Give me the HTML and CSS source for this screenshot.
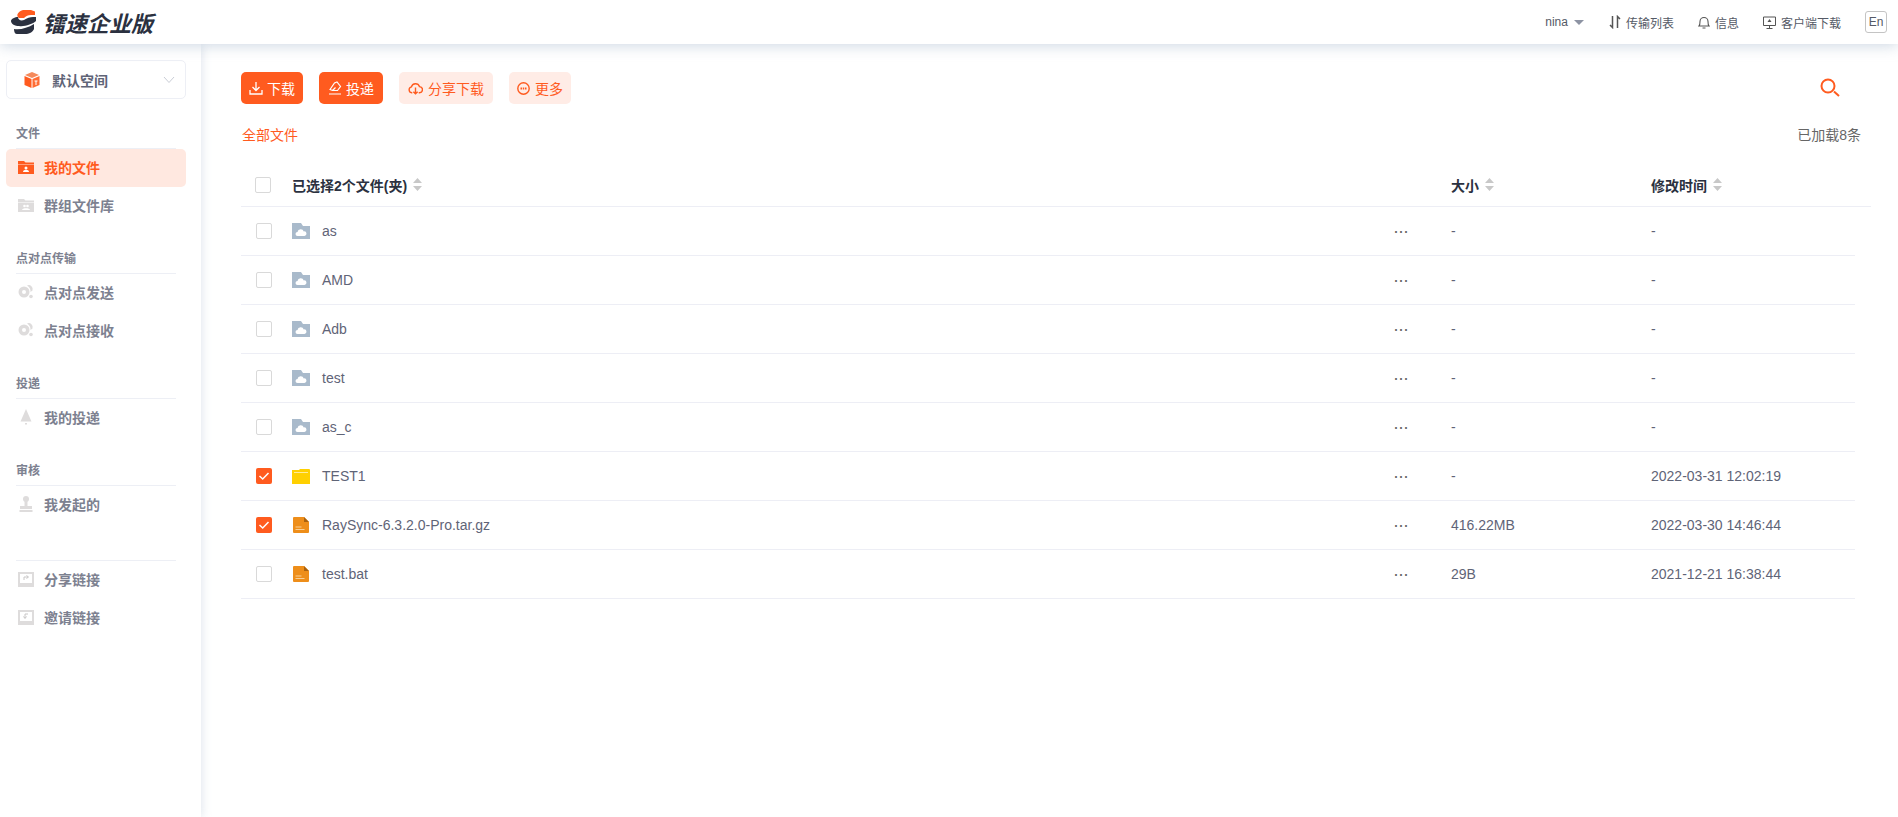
FILE: index.html
```html
<!DOCTYPE html>
<html lang="zh-CN">
<head>
    <meta charset="UTF-8">
    <title>镭速企业版</title>
    <link rel="stylesheet" href="styles.css">
</head>
<body>
    <svg class="defs">
        <symbol id="cloud-folder" viewBox="0 0 18 16">
            <path d="M0 0h9l2 3h7v13H0z" fill="#a9bacb"/>
            <path d="M5.500 13a2 2 0 0 1 0-4 3.300 3.300 0 0 1 6.300-.6 2.300 2.300 0 0 1 .7 4.600z" fill="#fff"/>
        </symbol>
        <symbol id="file-orange" viewBox="0 0 16 16">
            <path d="M1 0h10l5 5v10a1 1 0 0 1-1 1H1a1 1 0 0 1-1-1V1a1 1 0 0 1 1-1z" fill="#ee8e1a"/>
            <path d="M11 0l5 5h-5z" fill="#a9620f"/>
            <path d="M2.500 9.500h6v1h-6zM2.500 12h9v1h-9z" fill="#f8cf95"/>
        </symbol>
        <symbol id="sort" viewBox="0 0 9 13">
            <path d="M4.500 0L9 5H0zM0 8h9l-4.500 5z" fill="#c8c8c8"/>
        </symbol>
        <symbol id="p2p" viewBox="0 0 16 16">
            <circle cx="6" cy="8" r="5.500" fill="#dedcdc"/>
            <circle cx="6" cy="8" r="2" fill="#fff"/>
            <path d="M9 1.500a4 4 0 0 1 5.500 5L12.500 8A7 7 0 0 0 9 1.500z" fill="#dedcdc"/>
            <circle cx="13" cy="12.500" r="1.800" fill="#dedcdc"/>
        </symbol>
    </svg>

    <header class="topbar">
        <div class="logo">
            <svg class="logo-mark" width="26" height="24" viewBox="0 0 26 24">
                <path d="M12 0h8l4 1.500V5h-4c-3 0-5 1-7 3H8C5 6 6 2 12 0z" fill="#ff5b1f"/>
                <path d="M0 11c0-2 4-4 7-4 0 3 3 4 6 3 3-2 6-3 9-3h3v4c-3 3-12 6-17 5-4 0-8-2-8-5z" fill="#2b3140"/>
                <path d="M3 19c6 1 14-1 20-5v5c-1 3-5 5-9 5H6c-2 0-3-2-3-5z" fill="#2b3140"/>
            </svg>
            <span class="logo-text">镭速企业版</span>
        </div>
        <nav class="top-nav">
            <span class="user">nina<i class="caret"></i></span>
            <a class="top-link">
                <svg width="12" height="14" viewBox="0 0 12 14"><path d="M3.500 1v11.500L1 10M8.500 13V1.500L11 4" fill="none" stroke="#555" stroke-width="1.500"/></svg>
                传输列表
            </a>
            <a class="top-link">
                <svg width="12" height="13" viewBox="0 0 12 13"><path d="M1 10c1-1 1-2 1-4.500a4 4 0 0 1 8 0c0 2.500 0 3.500 1 4.500zM4.500 12h3" fill="none" stroke="#555" stroke-width="1.100"/></svg>
                信息
            </a>
            <a class="top-link">
                <svg width="13" height="13" viewBox="0 0 13 13"><path d="M.5 1h12v8.500H.5zM6.500 9.500V12M3.500 12.500h6" fill="none" stroke="#555"/><path d="M6.500 3L4.500 6h4z" fill="#555"/></svg>
                客户端下载
            </a>
            <span class="lang">En</span>
        </nav>
    </header>

    <div class="layout">
        <aside class="sidebar">
            <div class="space-select">
                <svg width="16" height="16" viewBox="0 0 16 16"><path d="M8 0l7 3-7 3-7-3z" fill="#f58a5c"/><path d="M.5 4l7 3v9l-7-3z" fill="#ff5b1f"/><path d="M8.500 7l7-3v9l-7 3z" fill="#ff6d35"/><path d="M10.500 9h3M12 9v4" stroke="#fff" fill="none"/></svg>
                <span>默认空间</span>
                <svg class="chevron" width="12" height="8" viewBox="0 0 12 8"><path d="M1 1l5 5.500L11 1" fill="none" stroke="#c9cdd6"/></svg>
            </div>

            <div class="side-group">
                <div class="side-title">文件</div>
                <a class="side-item active">
                    <svg width="16" height="14" viewBox="0 0 16 14"><path d="M0 1h6l1.500 1.500H16V4H0z" fill="#ff5b1f"/><path d="M0 4.500h16V14H0z" fill="#ff5b1f"/><circle cx="8" cy="8" r="1.500" fill="#fff"/><path d="M5 12c0-3 6-3 6 0z" fill="#fff"/></svg>
                    我的文件
                </a>
                <a class="side-item">
                    <svg width="16" height="14" viewBox="0 0 16 14"><path d="M0 1h6l1.500 1.500H16V4H0z" fill="#dedcdc"/><path d="M0 4.500h16V14H0z" fill="#dedcdc"/><circle cx="6.500" cy="8" r="1.300" fill="#fff"/><circle cx="9.500" cy="8" r="1.300" fill="#fff"/><path d="M4 12c0-2.500 8-2.500 8 0z" fill="#fff"/></svg>
                    群组文件库
                </a>
            </div>

            <div class="side-group">
                <div class="side-title">点对点传输</div>
                <a class="side-item"><svg width="16" height="16"><use href="#p2p"/></svg>点对点发送</a>
                <a class="side-item"><svg width="16" height="16"><use href="#p2p"/></svg>点对点接收</a>
            </div>

            <div class="side-group">
                <div class="side-title">投递</div>
                <a class="side-item">
                    <svg width="16" height="16" viewBox="0 0 16 16"><path d="M8 0l5.500 12.500H2.500z" fill="#dedcdc"/><path d="M7 14h2v1.500H7z" fill="#dedcdc"/></svg>
                    我的投递
                </a>
            </div>

            <div class="side-group">
                <div class="side-title">审核</div>
                <a class="side-item">
                    <svg width="16" height="16" viewBox="0 0 16 16"><circle cx="8" cy="3" r="3" fill="#dedcdc"/><path d="M6.500 5h3v5h-3z" fill="#dedcdc"/><path d="M2 10h12v3H2zM1.500 14h13v2h-13z" fill="#dedcdc"/></svg>
                    我发起的
                </a>
            </div>

            <div class="side-group links">
                <a class="side-item">
                    <svg width="16" height="15" viewBox="0 0 16 15"><path d="M0 0h16v15H0z" fill="#dedcdc"/><path d="M2 2h12v9H2z" fill="#fff"/><path d="M6 8V5h4M8.500 3.500L10.500 5 8.500 6.500" fill="none" stroke="#c8c6c6"/></svg>
                    分享链接
                </a>
                <a class="side-item">
                    <svg width="16" height="15" viewBox="0 0 16 15"><path d="M0 0h16v15H0z" fill="#dedcdc"/><path d="M2 2h12v9H2z" fill="#fff"/><path d="M10 4H7v4M5.500 6.500L7 8.500 8.500 6.500" fill="none" stroke="#c8c6c6"/></svg>
                    邀请链接
                </a>
            </div>
        </aside>

        <main class="content">
            <div class="toolbar">
                <button class="btn primary small">
                    <svg width="14" height="14" viewBox="0 0 14 14"><path d="M7 1v8M3.500 6L7 9.500 10.500 6M1 9v4h12V9" fill="none" stroke="#fff" stroke-width="1.300"/></svg>
                    下载
                </button>
                <button class="btn primary">
                    <svg width="14" height="14" viewBox="0 0 14 14"><path d="M2 8.500L6.500 2 9 1l3.500 4.500L9.500 9.500H4.500zM4.500 9.500l3-3M1 13h12" fill="none" stroke="#fff" stroke-width="1.200"/></svg>
                    投递
                </button>
                <button class="btn light">
                    <svg width="15" height="13" viewBox="0 0 14 12"><path d="M4 10H3.500a2.800 2.800 0 0 1-.3-5.500 3.900 3.900 0 0 1 7.500-.3A2.900 2.900 0 0 1 10.500 10H10M7 5v6M5 9l2 2 2-2" fill="none" stroke="#ff5b1f" stroke-width="1.300"/></svg>
                    分享下载
                </button>
                <button class="btn light small">
                    <svg width="13" height="13" viewBox="0 0 13 13"><circle cx="6.500" cy="6.500" r="5.700" fill="none" stroke="#ff5b1f" stroke-width="1.400"/><path d="M3.500 6.500h6" stroke="#ff5b1f" stroke-width="1.800" stroke-dasharray="1.500 .75"/></svg>
                    更多
                </button>
                <svg class="search" width="21" height="19" viewBox="0 0 21 19"><circle cx="8" cy="8" r="6.500" fill="none" stroke="#ff5b1f" stroke-width="2"/><path d="M14 13.500l5 4.500" stroke="#ff5b1f" stroke-width="2"/></svg>
            </div>

            <div class="crumbs">
                <a class="crumb">全部文件</a>
                <span class="loaded">已加载8条</span>
            </div>

            <div class="table-head">
                <i class="check"></i>
                <span class="head-cell">已选择2个文件(夹)<svg width="9" height="13"><use href="#sort"/></svg></span>
                <span></span>
                <span class="head-cell">大小<svg width="9" height="13"><use href="#sort"/></svg></span>
                <span class="head-cell">修改时间<svg width="9" height="13"><use href="#sort"/></svg></span>
            </div>

            <div class="row">
                <i class="check"></i>
                <span class="name"><svg class="type-icon" width="18" height="16"><use href="#cloud-folder"/></svg>as</span>
                <span class="dots">···</span><span>-</span><span>-</span>
            </div>
            <div class="row">
                <i class="check"></i>
                <span class="name"><svg class="type-icon" width="18" height="16"><use href="#cloud-folder"/></svg>AMD</span>
                <span class="dots">···</span><span>-</span><span>-</span>
            </div>
            <div class="row">
                <i class="check"></i>
                <span class="name"><svg class="type-icon" width="18" height="16"><use href="#cloud-folder"/></svg>Adb</span>
                <span class="dots">···</span><span>-</span><span>-</span>
            </div>
            <div class="row">
                <i class="check"></i>
                <span class="name"><svg class="type-icon" width="18" height="16"><use href="#cloud-folder"/></svg>test</span>
                <span class="dots">···</span><span>-</span><span>-</span>
            </div>
            <div class="row">
                <i class="check"></i>
                <span class="name"><svg class="type-icon" width="18" height="16"><use href="#cloud-folder"/></svg>as_c</span>
                <span class="dots">···</span><span>-</span><span>-</span>
            </div>
            <div class="row">
                <i class="check checked"><svg width="16" height="16" viewBox="0 0 16 16"><path d="M3.500 8l3.200 3 5.800-6" fill="none" stroke="#fff" stroke-width="1.500"/></svg></i>
                <span class="name">
                    <svg class="type-icon" width="18" height="15" viewBox="0 0 18 15"><path d="M0 1h7l1-1h9a1 1 0 0 1 1 1v14H0z" fill="#ffd000"/><path d="M2 3h14v1H2z" fill="#ffeb99"/></svg>TEST1
                </span>
                <span class="dots">···</span><span>-</span><span>2022-03-31 12:02:19</span>
            </div>
            <div class="row">
                <i class="check checked"><svg width="16" height="16" viewBox="0 0 16 16"><path d="M3.500 8l3.200 3 5.800-6" fill="none" stroke="#fff" stroke-width="1.500"/></svg></i>
                <span class="name"><svg class="type-icon file" width="16" height="16"><use href="#file-orange"/></svg>RaySync-6.3.2.0-Pro.tar.gz</span>
                <span class="dots">···</span><span>416.22MB</span><span>2022-03-30 14:46:44</span>
            </div>
            <div class="row">
                <i class="check"></i>
                <span class="name"><svg class="type-icon file" width="16" height="16"><use href="#file-orange"/></svg>test.bat</span>
                <span class="dots">···</span><span>29B</span><span>2021-12-21 16:38:44</span>
            </div>
        </main>
    </div>
</body>
</html>
```

FILE: styles.css
```css
* {
    box-sizing: border-box;
}

body, html {
    margin: 0;
    height: 100%;
    background-color: #fff;
    font-family: "Liberation Sans", "Noto Sans CJK SC", sans-serif;
    font-size: 14px;
    color: #5f6477;
}

.defs {
    display: none;
}

/* top bar */
.topbar {
    position: relative;
    z-index: 2;
    display: flex;
    align-items: center;
    justify-content: space-between;
    height: 44px;
    padding: 0 11px;
    background-color: #fff;
    box-shadow: 0 2px 14px rgba(170, 185, 205, 0.55);
}

.logo {
    display: flex;
    align-items: center;
    gap: 6px;
}

.logo-text {
    font-size: 22px;
    font-weight: 700;
    font-style: italic;
    color: #2b3140;
}

.top-nav {
    display: flex;
    align-items: center;
    font-size: 12px;
    color: #555a66;
}

.user {
    display: flex;
    align-items: center;
    gap: 6px;
    margin-right: 25px;
}

.caret {
    width: 0;
    height: 0;
    border-left: 5px solid transparent;
    border-right: 5px solid transparent;
    border-top: 5px solid #8d93a3;
}

.top-link {
    display: flex;
    align-items: center;
    gap: 5px;
    margin-right: 24px;
}

.lang {
    width: 22px;
    height: 22px;
    line-height: 20px;
    text-align: center;
    border: 1px solid #c4c4c4;
    border-radius: 3px;
}

/* sidebar */
.layout {
    display: flex;
    height: calc(100% - 44px);
}

.sidebar {
    width: 201px;
    flex-shrink: 0;
    padding: 16px 15px 0 6px;
    box-shadow: 2px 0 8px rgba(170, 185, 205, 0.3);
}

.space-select {
    display: flex;
    align-items: center;
    height: 39px;
    padding: 0 10px 0 17px;
    border: 1px solid #edeff5;
    border-radius: 5px;
    font-size: 14px;
    font-weight: 700;
    color: #5f6477;
}

.space-select span {
    margin-left: 12px;
}

.chevron {
    margin-left: auto;
}

.side-group {
    margin-top: 24px;
}

.space-select + .side-group {
    margin-top: 25px;
}

.side-title {
    margin: 0 10px;
    padding-top: 2px;
    height: 25px;
    line-height: 17px;
    font-size: 12px;
    font-weight: 700;
    color: #7d8190;
    border-bottom: 1px solid #edeff5;
}

.side-item {
    display: flex;
    align-items: center;
    gap: 10px;
    height: 38px;
    padding: 0 0 2px 12px;
    border-radius: 5px;
    font-size: 14px;
    font-weight: 700;
    color: #7d8190;
}

.side-item svg {
    flex-shrink: 0;
}

.side-item.active {
    background-color: #ffe8e0;
    color: #ff5b1f;
}

.side-group.links {
    margin: 36px 10px 0;
    border-top: 1px solid #edeff5;
}

.side-group.links .side-item {
    margin-left: -10px;
}

/* main area */
.content {
    flex: 1;
    min-width: 0;
    padding: 28px 27px 0 40px;
}

.toolbar {
    display: flex;
    align-items: center;
    gap: 16px;
    height: 32px;
}

.btn {
    display: flex;
    align-items: center;
    gap: 4px;
    height: 32px;
    padding: 0 9px;
    border: none;
    border-radius: 5px;
    font-family: inherit;
    font-size: 14px;
}

.btn.small {
    padding: 0 8px;
}

.btn.primary {
    background-color: #ff5b1f;
    color: #fff;
}

.btn.light {
    background-color: #ffece6;
    color: #ff5b1f;
    gap: 5px;
}

.search {
    margin-left: auto;
    margin-right: 30px;
    margin-top: -2px;
}

.crumbs {
    display: flex;
    justify-content: space-between;
    align-items: center;
    margin-top: 21px;
    height: 18px;
    font-size: 14px;
}

.crumb {
    color: #ff5b1f;
    margin-left: 1px;
}

.loaded {
    color: #666;
    margin-right: 10px;
}

/* file table */
.table-head, .row {
    display: grid;
    align-items: center;
}

.table-head {
    grid-template-columns: 51px 1fr 58px 200px 220px;
    height: 53px;
    margin-top: 11px;
    padding-top: 9px;
    border-bottom: 1px solid #edeef5;
    font-weight: 700;
    color: #2b3140;
}

.table-head .check {
    margin-left: 14px;
}

.head-cell {
    display: flex;
    align-items: center;
    gap: 6px;
}

.row {
    grid-template-columns: 51px 1fr 58px 200px 204px;
    height: 49px;
    margin-right: 16px;
    border-bottom: 1px solid #edeef5;
}

.check {
    display: block;
    width: 16px;
    height: 16px;
    margin-left: 15px;
    border: 1px solid #d9d9d9;
    border-radius: 2px;
    background-color: #fff;
}

.check.checked {
    border: none;
    background-color: #ff5b1f;
}

.check svg {
    display: block;
}

.name {
    display: flex;
    align-items: center;
}

.type-icon {
    margin-right: 12px;
}

.type-icon.file {
    margin-left: 1px;
    margin-right: 13px;
}

.dots {
    font-size: 18px;
    line-height: 14px;
    letter-spacing: -1px;
    color: #666;
}
```
